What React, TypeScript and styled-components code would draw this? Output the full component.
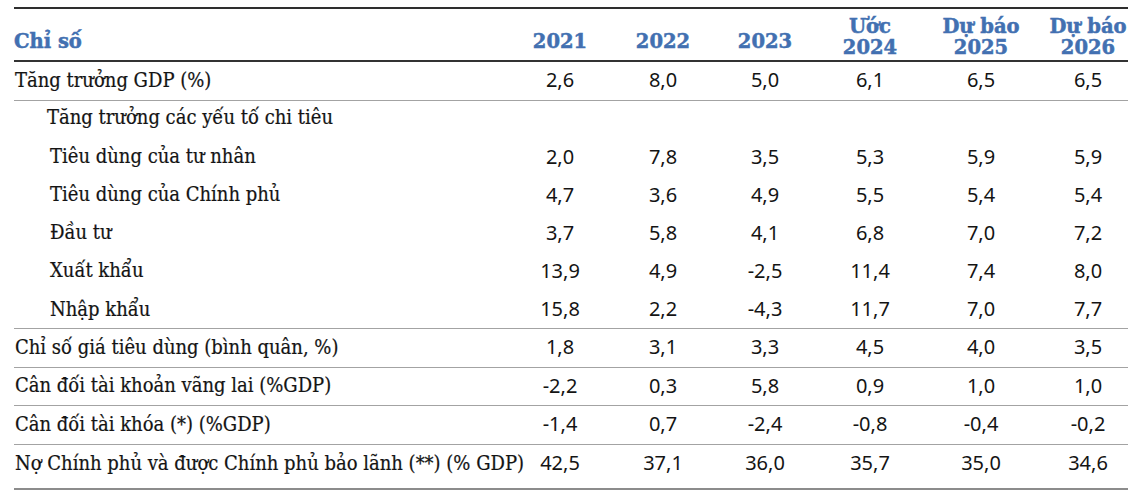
import React from "react";
import styled, { createGlobalStyle } from "styled-components";

const GlobalStyle = createGlobalStyle`
  html, body { margin: 0; padding: 0; background: #ffffff; }
  * { box-sizing: border-box; }
`;

const Sheet = styled.div`
  margin: 7px 0 0 14px;
  width: 1114px;
  border-top: 2px solid #2e2e2e;
`;

type RowKind = "head" | "main" | "sub" | "last";

const Row = styled.div<{ $h: number; $line: "dark" | "light" | "none" | "bottom"; $pb: number }>`
  display: grid;
  grid-template-columns: 494px 104px 102px 102px 108px 114px 90px;
  height: ${(p) => p.$h}px;
  padding-bottom: ${(p) => p.$pb}px;
  align-items: center;
  border-bottom: ${(p) =>
    p.$line === "dark"
      ? "2px solid #333333"
      : p.$line === "light"
      ? "1px solid #a3a3a3"
      : p.$line === "bottom"
      ? "2px solid #8c8c8c"
      : "none"};
`;

const HeadRow = styled(Row)`
  align-items: end;
`;

const HeadCell = styled.div<{ $stacked?: boolean; $left?: boolean }>`
  font-family: "DejaVu Serif", serif;
  font-weight: 700;
  font-size: 19.5px;
  line-height: 21px;
  color: #4270b1;
  -webkit-text-stroke: 0.5px #4270b1;
  text-align: ${(p) => (p.$left ? "left" : "center")};
  padding-bottom: ${(p) => (p.$stacked ? 2 : 8)}px;
  white-space: nowrap;
  &:last-child { padding-left: 10px; }
`;

const Label = styled.div<{ $indent: number }>`
  font-family: "DejaVu Serif Condensed", "DejaVu Serif", serif;
  font-stretch: condensed;
  font-size: 20px;
  color: #141414;
  -webkit-text-stroke: 0.2px #141414;
  padding-left: ${(p) => p.$indent}px;
  white-space: nowrap;
`;

const Value = styled.div`
  font-family: "Noto Sans", sans-serif;
  font-size: 20px;
  color: #141414;
  text-align: center;
  &:last-child { padding-left: 10px; }
`;

type Line = { label: string; kind: RowKind; indent: number; h: number; pb: number; line: "light" | "none" | "bottom"; values?: string[] };

const rows: Line[] = [
  { label: "Tăng trưởng GDP (%)", kind: "main", indent: 1, h: 39, pb: 3, line: "light", values: ["2,6", "8,0", "5,0", "6,1", "6,5", "6,5"] },
  { label: "Tăng trưởng các yếu tố chi tiêu", kind: "sub", indent: 33, h: 38, pb: 6, line: "none" },
  { label: "Tiêu dùng của tư nhân", kind: "sub", indent: 36, h: 38, pb: 4, line: "none", values: ["2,0", "7,8", "3,5", "5,3", "5,9", "5,9"] },
  { label: "Tiêu dùng của Chính phủ", kind: "sub", indent: 36, h: 38, pb: 4, line: "none", values: ["4,7", "3,6", "4,9", "5,5", "5,4", "5,4"] },
  { label: "Đầu tư", kind: "sub", indent: 36, h: 38, pb: 4, line: "none", values: ["3,7", "5,8", "4,1", "6,8", "7,0", "7,2"] },
  { label: "Xuất khẩu", kind: "sub", indent: 36, h: 38, pb: 4, line: "none", values: ["13,9", "4,9", "-2,5", "11,4", "7,4", "8,0"] },
  { label: "Nhập khẩu", kind: "sub", indent: 36, h: 38, pb: 2, line: "light", values: ["15,8", "2,2", "-4,3", "11,7", "7,0", "7,7"] },
  { label: "Chỉ số giá tiêu dùng (bình quân, %)", kind: "main", indent: 1, h: 39, pb: 3, line: "light", values: ["1,8", "3,1", "3,3", "4,5", "4,0", "3,5"] },
  { label: "Cân đối tài khoản vãng lai (%GDP)", kind: "main", indent: 1, h: 38, pb: 3, line: "light", values: ["-2,2", "0,3", "5,8", "0,9", "1,0", "1,0"] },
  { label: "Cân đối tài khóa (*) (%GDP)", kind: "main", indent: 1, h: 39, pb: 3, line: "light", values: ["-1,4", "0,7", "-2,4", "-0,8", "-0,4", "-0,2"] },
  { label: "Nợ Chính phủ và được Chính phủ bảo lãnh (**) (% GDP)", kind: "last", indent: 1, h: 45, pb: 8, line: "bottom", values: ["42,5", "37,1", "36,0", "35,7", "35,0", "34,6"] },
];

const heads: { top?: string; bottom: string }[] = [
  { bottom: "2021" },
  { bottom: "2022" },
  { bottom: "2023" },
  { top: "Ước", bottom: "2024" },
  { top: "Dự báo", bottom: "2025" },
  { top: "Dự báo", bottom: "2026" },
];

export default function App() {
  return (
    <>
      <GlobalStyle />
      <Sheet>
        <HeadRow $h={53} $pb={0} $line="dark">
          <HeadCell $left>Chỉ số</HeadCell>
          {heads.map((h, i) => (
            <HeadCell key={i} $stacked={!!h.top}>
              {h.top && (
                <>
                  {h.top}
                  <br />
                </>
              )}
              {h.bottom}
            </HeadCell>
          ))}
        </HeadRow>
        {rows.map((r, i) => (
          <Row key={i} $h={r.h} $pb={r.pb} $line={r.line}>
            <Label $indent={r.indent}>{r.label}</Label>
            {(r.values ?? ["", "", "", "", "", ""]).map((v, j) => (
              <Value key={j}>{v}</Value>
            ))}
          </Row>
        ))}
      </Sheet>
    </>
  );
}
